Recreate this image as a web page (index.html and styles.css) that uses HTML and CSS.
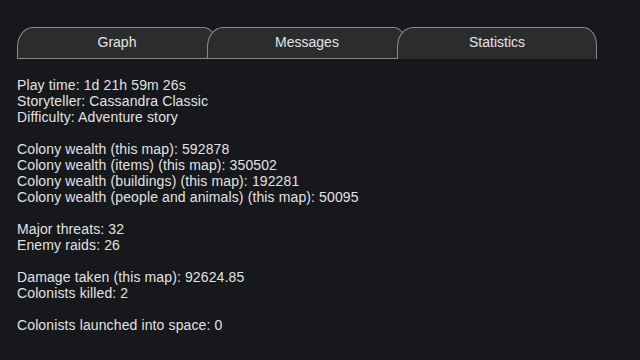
FILE: index.html
```html
<!DOCTYPE html>
<html>
<head>
<meta charset="utf-8">
<link rel="stylesheet" href="styles.css">
</head>
<body>
<div class="page">
  <div class="tabs">
    <div class="tab">Graph</div>
    <div class="tab">Messages</div>
    <div class="tab active">Statistics</div>
  </div>
  <div class="stats">
    <div class="group">
      <div>Play time: 1d 21h 59m 26s</div>
      <div>Storyteller: Cassandra Classic</div>
      <div>Difficulty: Adventure story</div>
    </div>
    <div class="group">
      <div>Colony wealth (this map): 592878</div>
      <div>Colony wealth (items) (this map): 350502</div>
      <div>Colony wealth (buildings) (this map): 192281</div>
      <div>Colony wealth (people and animals) (this map): 50095</div>
    </div>
    <div class="group">
      <div>Major threats: 32</div>
      <div>Enemy raids: 26</div>
    </div>
    <div class="group">
      <div>Damage taken (this map): 92624.85</div>
      <div>Colonists killed: 2</div>
    </div>
    <div class="group">
      <div>Colonists launched into space: 0</div>
    </div>
  </div>
</div>
</body>
</html>
```
FILE: styles.css
```css
html, body {
  margin: 0;
  padding: 0;
  background: #16181c;
  width: 640px;
  height: 360px;
  overflow: hidden;
}
.page {
  padding: 27px 0 0 17px;
  font-family: "Liberation Sans", Arial, sans-serif;
  color: #e2e2e2;
  font-size: 14px;
}
.tabs {
  display: flex;
  height: 32px;
}
.tab {
  box-sizing: border-box;
  width: 200px;
  height: 32px;
  margin-right: -10px;
  background: #2b2c2e;
  border: 1px solid #8a8a8a;
  border-top-left-radius: 16px 20px;
  border-top-right-radius: 14px 18px;
  display: flex;
  align-items: center;
  justify-content: center;
  font-size: 14px;
  color: #e4e4e4;
  padding-bottom: 2px;
}
.tab.active {
  border-bottom: none;
  padding-bottom: 3px;
}
.stats {
  margin-top: 18px;
  line-height: 16px;
  letter-spacing: 0.12px;
}
.group {
  margin-bottom: 16px;
}
```
